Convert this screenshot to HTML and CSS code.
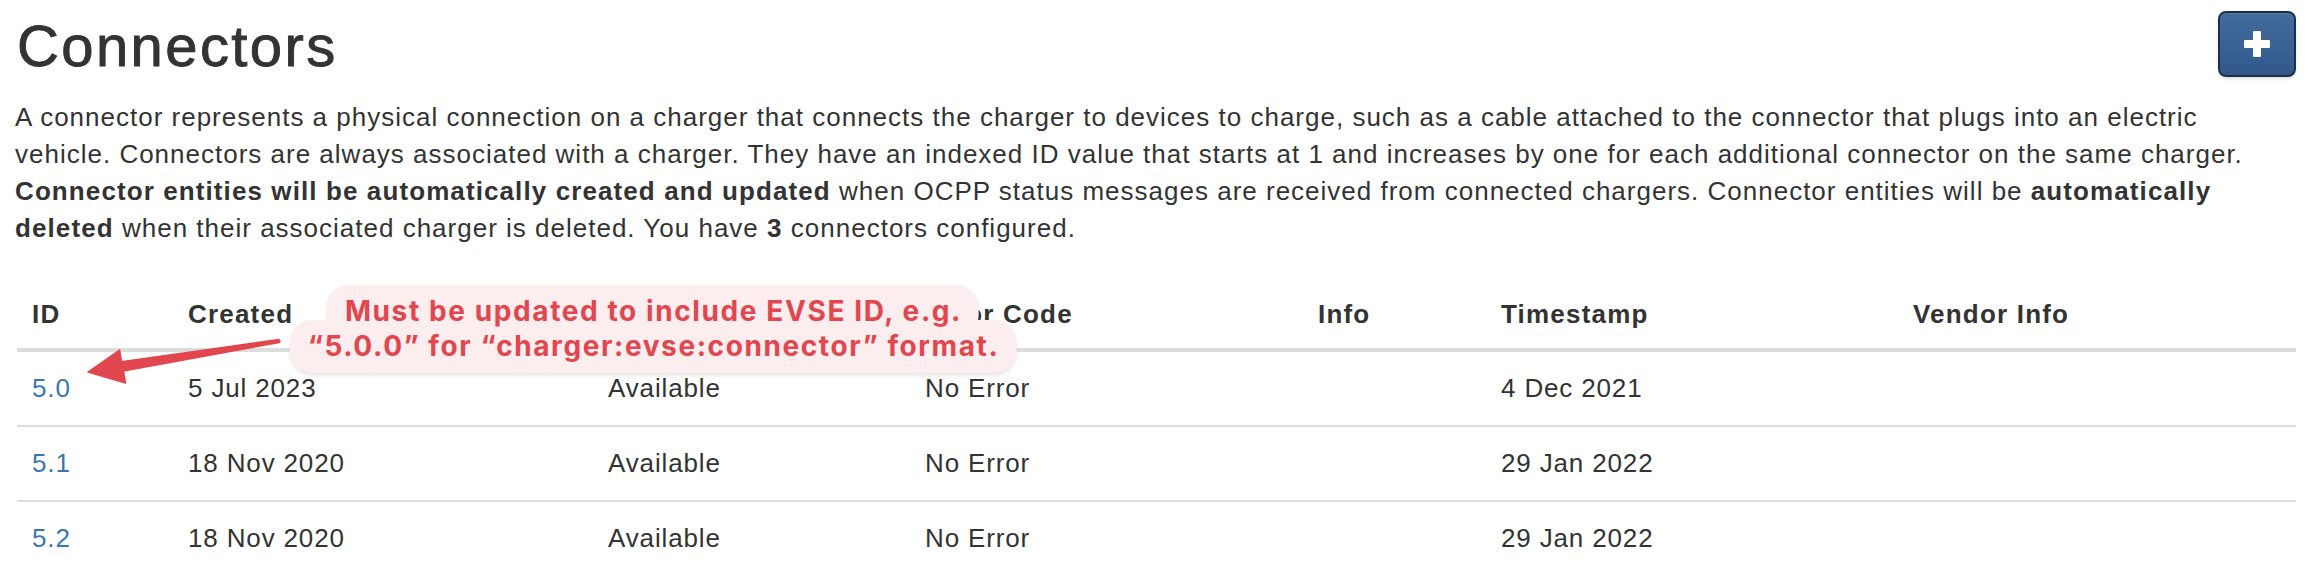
FILE: index.html
```html
<!DOCTYPE html>
<html lang="en">
<head>
<meta charset="utf-8">
<title>Connectors</title>
<link rel="stylesheet" href="styles.css">
</head>
<body>
<div class="page">
  <div class="header">
    <h1 class="title">Connectors</h1>
    <button class="btn-add" type="button" aria-label="Add connector">
      <svg class="plus" width="26" height="26" viewBox="0 0 26 26" aria-hidden="true">
        <rect x="9" y="0" width="8" height="26" rx="1" fill="#fff"/>
        <rect x="0" y="9" width="26" height="8" rx="1" fill="#fff"/>
      </svg>
    </button>
  </div>
  <p class="intro">A connector represents a physical connection on a charger that connects the charger to devices to charge, such as a cable attached to the connector that plugs into an electric vehicle. Connectors are always associated with a charger. They have an indexed ID value that starts at 1 and increases by one for each additional connector on the same charger. <b>Connector entities will be automatically created and updated</b> when OCPP status messages are received from connected chargers. Connector entities will be <b>automatically deleted</b> when their associated charger is deleted. You have <b>3</b> connectors configured.</p>
  <table class="table">
    <colgroup>
      <col class="col-id">
      <col class="col-created">
      <col class="col-status">
      <col class="col-error">
      <col class="col-info">
      <col class="col-time">
      <col class="col-vendor">
    </colgroup>
    <thead>
      <tr><th>ID</th><th>Created</th><th>Status</th><th>Error Code</th><th>Info</th><th>Timestamp</th><th>Vendor Info</th></tr>
    </thead>
    <tbody>
      <tr><td><a href="#">5.0</a></td><td>5 Jul 2023</td><td>Available</td><td>No Error</td><td></td><td>4 Dec 2021</td><td></td></tr>
      <tr><td><a href="#">5.1</a></td><td>18 Nov 2020</td><td>Available</td><td>No Error</td><td></td><td>29 Jan 2022</td><td></td></tr>
      <tr><td><a href="#">5.2</a></td><td>18 Nov 2020</td><td>Available</td><td>No Error</td><td></td><td>29 Jan 2022</td><td></td></tr>
    </tbody>
  </table>
  <svg class="arrow" width="2308" height="578" viewBox="0 0 2308 578" aria-hidden="true">
    <path d="M88 372 L119.5 350 L121.6 361.8 L278.8 339.5 Q281 341 279.2 342.5 L123.4 371 L125.5 383 Z" fill="#e2464e" stroke="#e2464e" stroke-width="1.5" stroke-linejoin="round"/>
  </svg>
  <div class="bubble">
    <span class="bubble-line">Must be updated to include EVSE ID, e.g.</span>
    <span class="bubble-line bubble-line-2">“5.0.0” for “charger:evse:connector” format.</span>
  </div>
</div>
</body>
</html>
```
FILE: styles.css
```css
html, body {
  margin: 0;
  padding: 0;
  background: #fff;
}

body {
  font-family: "Liberation Sans", Arial, Helvetica, sans-serif;
  color: #333;
  font-size: 26px;
  line-height: 37px;
  letter-spacing: 0.75px;
}

.page {
  position: relative;
  width: 2308px;
  height: 578px;
  box-sizing: border-box;
  padding: 0 12px 0 17px;
  overflow: hidden;
}

.header {
  display: flex;
  justify-content: space-between;
  align-items: flex-start;
  padding-top: 11px;
}

.title {
  margin: 3px 0 0 0;
  font-size: 58px;
  line-height: 64px;
  font-weight: 500;
  letter-spacing: 2.4px;
  color: #333;
  -webkit-text-stroke: 0.9px #333;
}

.btn-add {
  width: 78px;
  height: 66px;
  padding: 0;
  border: 2px solid #1c2f4a;
  border-radius: 8px;
  background: linear-gradient(#426c9e, #32588a);
  box-shadow: 0 2px 3px rgba(0, 0, 0, 0.12), inset 0 1px 0 rgba(255, 255, 255, 0.12);
  display: flex;
  align-items: center;
  justify-content: center;
  cursor: pointer;
}

.plus {
  display: block;
}

.intro {
  margin: 21px 0 0 -2px;
  letter-spacing: 1px;
}

.intro b {
  font-weight: 700;
  letter-spacing: 1.1px;
}

.table {
  margin-top: 31px;
  width: 2279px;
  border-collapse: collapse;
  table-layout: fixed;
}

.col-id { width: 156px; }
.col-created { width: 420px; }
.col-status { width: 317px; }
.col-error { width: 393px; }
.col-info { width: 183px; }
.col-time { width: 412px; }
.col-vendor { width: 398px; }

.table th,
.table td {
  text-align: left;
  vertical-align: top;
  padding: 18px 15px;
  white-space: nowrap;
}

.table th {
  font-weight: 700;
  letter-spacing: 1.2px;
  padding-bottom: 15px;
  border-bottom: 4px solid #ddd;
}

.table td {
  border-top: 2px solid #ddd;
  letter-spacing: 0.85px;
}

.table a {
  color: #3a76b3;
  text-decoration: none;
}

.arrow {
  position: absolute;
  left: 0;
  top: 0;
  pointer-events: none;
  z-index: 3;
}

.bubble {
  position: absolute;
  left: 653px;
  top: 285px;
  transform: translateX(-50%);
  display: flex;
  flex-direction: column;
  align-items: center;
  font-family: Inter, "Noto Sans", sans-serif;
  font-weight: 700;
  font-size: 28px;
  line-height: 34px;
  letter-spacing: 1.6px;
  color: #e2464e;
  white-space: nowrap;
  isolation: isolate;
  z-index: 2;
}

.bubble-line {
  position: relative;
  display: block;
  padding: 9px 17px 9px 18px;
}

.bubble-line::before {
  content: "";
  position: absolute;
  inset: 0;
  z-index: -1;
  background: #fcedef;
  border-radius: 22px;
  box-shadow: 0 3px 5px -1px rgba(0, 0, 0, 0.12);
}

.bubble-line-2 {
  margin-top: -17px;
  padding-bottom: 10px;
}
```
